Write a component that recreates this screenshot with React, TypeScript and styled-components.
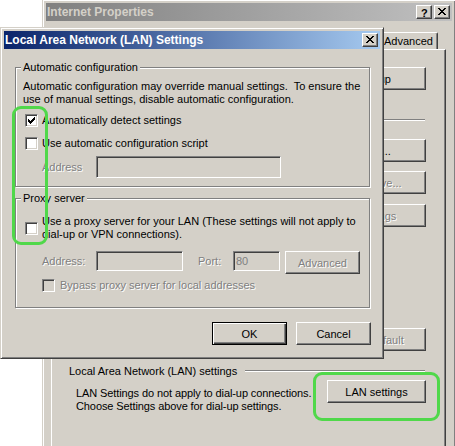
import React from "react";
import styled, { createGlobalStyle, css } from "styled-components";

const FACE = "#d4d0c8";
const SHADOW = "#808080";
const DARK = "#404040";
const FONT = `"Liberation Sans", Arial, sans-serif`;
const GREEN = "#50d84a";

const Global = createGlobalStyle`
  html, body { margin: 0; padding: 0; background: #fff; overflow: hidden; }
  body { font-family: ${FONT}; font-size: 11px; line-height: 13px; color: #000; }
`;

const Desktop = styled.div`
  position: relative;
  width: 455px;
  height: 446px;
  overflow: hidden;
  background: #fff;
`;

const Window = styled.div<{ $x: number; $y: number; $w: number; $h: number; $z: number }>`
  position: absolute;
  z-index: ${(p) => p.$z};
  left: ${(p) => p.$x}px;
  top: ${(p) => p.$y}px;
  width: ${(p) => p.$w}px;
  height: ${(p) => p.$h}px;
  box-sizing: border-box;
  background: ${FACE};
  border: 1px solid;
  border-color: ${FACE} ${DARK} ${DARK} ${FACE};
  box-shadow: inset 1px 1px 0 #fff, inset -1px -1px 0 ${SHADOW};
  padding: 3px;
  display: flex;
  flex-direction: column;
`;

const TitleBar = styled.div<{ $active?: boolean }>`
  flex: none;
  height: 18px;
  display: flex;
  align-items: center;
  padding: 0 2px 0 1px;
  background: ${(p) =>
    p.$active
      ? "linear-gradient(to right, #0a246a, #a6caf0)"
      : "linear-gradient(to right, #808080, #c0c0c0)"};
  color: ${(p) => (p.$active ? "#fff" : FACE)};
  font-weight: bold;
  font-size: 12px;
`;

const TitleText = styled.span`
  flex: 1;
  white-space: nowrap;
  overflow: hidden;
  line-height: 14px;
`;

const CaptionGroup = styled.div`
  display: flex;
  gap: 2px;
`;

const CaptionButton = styled.div`
  box-sizing: border-box;
  width: 16px;
  height: 14px;
  background: ${FACE};
  border: 1px solid;
  border-color: #fff ${DARK} ${DARK} #fff;
  box-shadow: inset -1px -1px 0 ${SHADOW};
  padding: 2px 0 0 3px;
  display: flex;
  align-items: flex-start;
  color: #000;
`;

const HelpGlyph = styled.span`
  font-weight: bold;
  font-size: 11px;
  line-height: 10px;
  margin-left: 1px;
`;

const X_RECTS: [number, number, number][] = [
  [0, 0, 2], [6, 0, 2], [1, 1, 2], [5, 1, 2], [2, 2, 4], [3, 3, 2],
  [2, 4, 4], [1, 5, 2], [5, 5, 2], [0, 6, 2], [6, 6, 2],
];

const CloseGlyph = () => (
  <svg width="8" height="7" viewBox="0 0 8 7" shapeRendering="crispEdges">
    <path d={X_RECTS.map(([x, y, w]) => `M${x} ${y}h${w}v1h-${w}z`).join("")} fill="#000" />
  </svg>
);

const CHECK_TOPS = [5, 6, 7, 6, 5, 4, 3];
const CheckGlyph = ({ color }: { color: string }) => (
  <svg width="11" height="11" viewBox="1 1 11 11" shapeRendering="crispEdges">
    <path d={CHECK_TOPS.map((t, i) => `M${3 + i} ${t}h1v3h-1z`).join("")} fill={color} />
  </svg>
);

/* ---------- common controls ---------- */

const Button = styled.button<{ $w?: number; $default?: boolean; $ml?: number }>`
  box-sizing: border-box;
  flex: none;
  width: ${(p) => p.$w ?? 75}px;
  height: 23px;
  padding: 0;
  margin: 0 0 0 ${(p) => p.$ml ?? 0}px;
  font-family: ${FONT};
  font-size: 11px;
  color: #000;
  background: ${FACE};
  border: 1px solid;
  border-color: #fff ${DARK} ${DARK} #fff;
  border-radius: 0;
  box-shadow: inset -1px -1px 0 ${SHADOW};
  white-space: nowrap;
  ${(p) =>
    p.$default &&
    css`
      border-color: #000;
      box-shadow: inset 1px 1px 0 #fff, inset -1px -1px 0 ${DARK}, inset -2px -2px 0 ${SHADOW};
    `}
  &:disabled {
    color: ${SHADOW};
    text-shadow: 1px 1px 0 #fff;
  }
`;

const Text = styled.span<{ $disabled?: boolean }>`
  white-space: nowrap;
  line-height: 13px;
  ${(p) =>
    p.$disabled &&
    css`
      color: ${SHADOW};
      text-shadow: 1px 1px 0 #fff;
    `}
`;

const CheckBox = styled.span<{ $disabled?: boolean }>`
  flex: none;
  display: block;
  box-sizing: border-box;
  width: 13px;
  height: 13px;
  border: 1px solid;
  border-color: ${SHADOW} #fff #fff ${SHADOW};
  box-shadow: inset 1px 1px 0 ${DARK}, inset -1px -1px 0 ${FACE};
  background: ${(p) => (p.$disabled ? FACE : "#fff")};
  svg { display: block; }
`;

const Radio = styled.span`
  flex: none;
  width: 12px;
  height: 12px;
  box-sizing: border-box;
  border-radius: 50%;
  border: 1px solid;
  border-color: ${SHADOW} #fff #fff ${SHADOW};
  background: #fff;
`;

const TextInput = styled.input<{ $w: number; $h: number }>`
  box-sizing: border-box;
  flex: none;
  width: ${(p) => p.$w}px;
  height: ${(p) => p.$h}px;
  margin: 0;
  padding: 0 2px;
  border: 1px solid;
  border-color: ${SHADOW} #fff #fff ${SHADOW};
  border-radius: 0;
  box-shadow: inset 1px 1px 0 ${DARK}, inset -1px -1px 0 ${FACE};
  background: ${FACE};
  font-family: ${FONT};
  font-size: 11px;
  color: ${SHADOW};
  -webkit-text-fill-color: ${SHADOW};
  opacity: 1;
`;

/* ---------- LAN dialog ---------- */

const DialogBody = styled.div`
  flex: 1;
  display: flex;
  flex-direction: column;
  padding: 18px 9px 10px 11px;
`;

const Group = styled.div<{ $mt?: number; $pt: number; $pb: number }>`
  position: relative;
  display: flex;
  flex-direction: column;
  margin: ${(p) => p.$mt ?? 0}px 1px 0 0;
  padding: ${(p) => p.$pt}px 6px ${(p) => p.$pb}px 7px;
  border: 1px solid ${SHADOW};
  box-shadow: 1px 1px 0 #fff, inset 1px 1px 0 #fff;
`;

const GroupLabel = styled.span`
  position: absolute;
  top: -7px;
  left: 5px;
  padding: 0 2px;
  line-height: 13px;
  background: ${FACE};
  white-space: nowrap;
`;

const Paragraph = styled.div`
  line-height: 13px;
  white-space: nowrap;
`;

const CheckRow = styled.div<{ $mt?: number; $indent: number; $gap?: number }>`
  display: flex;
  align-items: center;
  gap: ${(p) => p.$gap ?? 4}px;
  margin: ${(p) => p.$mt ?? 0}px 0 0 ${(p) => p.$indent}px;
`;

const FieldRow = styled.div<{ $mt: number; $align: string }>`
  display: flex;
  align-items: ${(p) => p.$align};
  margin: ${(p) => p.$mt}px 0 0 19px;
`;

const FieldLabel = styled(Text)<{ $w: number; $lh: number; $ml?: number }>`
  flex: none;
  width: ${(p) => p.$w}px;
  line-height: ${(p) => p.$lh}px;
  margin-left: ${(p) => p.$ml ?? 0}px;
`;

const ButtonRow = styled.div`
  display: flex;
  justify-content: flex-end;
  gap: 9px;
  margin-top: 14px;
`;

/* ---------- Internet Properties ---------- */

const TabStrip = styled.div`
  display: flex;
  align-items: flex-end;
  height: 19px;
  margin: 9px 0 0 5px;
`;

const Tab = styled.div<{ $w: number; $active?: boolean }>`
  box-sizing: border-box;
  flex: none;
  width: ${(p) => p.$w}px;
  height: 17px;
  padding-top: 1px;
  display: flex;
  align-items: center;
  justify-content: center;
  background: ${FACE};
  border: 1px solid;
  border-bottom: none;
  border-color: #fff ${DARK} transparent #fff;
  border-radius: 2px 2px 0 0;
  box-shadow: inset -1px 0 0 ${SHADOW};
  white-space: nowrap;
  ${(p) =>
    p.$active &&
    css`
      height: 20px;
      margin: 0 -2px -1px;
      position: relative;
      z-index: 1;
    `}
`;

const TabPanel = styled.div`
  flex: 1;
  display: flex;
  flex-direction: column;
  width: 395px;
  box-sizing: border-box;
  margin-left: 5px;
  padding: 17px 19px 0 17px;
  border: 1px solid;
  border-color: #fff ${DARK} ${DARK} #fff;
  box-shadow: inset -1px -1px 0 ${SHADOW};
`;

const EndRow = styled.div<{ $mt: number }>`
  display: flex;
  align-items: center;
  justify-content: flex-end;
  margin-top: ${(p) => p.$mt}px;
`;

const SectionHeader = styled.div<{ $mt: number }>`
  display: flex;
  align-items: flex-start;
  gap: 8px;
  height: 13px;
  margin-top: ${(p) => p.$mt}px;
`;

const EtchedLine = styled.div`
  flex: 1;
  height: 1px;
  margin: 5px 1px 0 0;
  background: ${SHADOW};
  border-bottom: 1px solid #fff;
`;

const DialRow = styled.div`
  display: flex;
  gap: 8px;
  margin-top: 12px;
`;

const ListBox = styled.div`
  flex: 1;
  height: 88px;
  box-sizing: border-box;
  border: 1px solid;
  border-color: ${SHADOW} #fff #fff ${SHADOW};
  box-shadow: inset 1px 1px 0 ${DARK}, inset -1px -1px 0 ${FACE};
  background: #fff;
`;

const ButtonColumn = styled.div`
  display: flex;
  flex-direction: column;
  & > :nth-child(2) { margin-top: 9px; }
  & > :nth-child(3) { margin-top: 10px; }
`;

const RadioList = styled.div`
  display: flex;
  flex-direction: column;
  gap: 8px;
  margin: 10px 0 0 2px;
`;

const LanRow = styled.div`
  display: flex;
  align-items: flex-start;
  justify-content: space-between;
  margin-top: 2px;
`;

const LanText = styled.div`
  margin: 7px 0 0 7px;
  line-height: 13px;
  letter-spacing: -0.1px;
  white-space: nowrap;
`;

/* ---------- annotation ---------- */

const Highlight = styled.div<{ $x: number; $y: number; $w: number; $h: number }>`
  position: absolute;
  z-index: 5;
  left: ${(p) => p.$x}px;
  top: ${(p) => p.$y}px;
  width: ${(p) => p.$w}px;
  height: ${(p) => p.$h}px;
  box-sizing: border-box;
  border: 3px solid ${GREEN};
  border-radius: 9px;
  pointer-events: none;
`;

/* tabs left of "Advanced" lie under the LAN dialog; only their frames are drawn */
const TABS: { label?: string; w: number; active?: boolean }[] = [
  { w: 50 },
  { w: 54 },
  { w: 50 },
  { w: 52 },
  { w: 72, active: true },
  { w: 54 },
  { label: "Advanced", w: 59 },
];

export default function App() {
  return (
    <>
      <Global />
      <Desktop>
        <Window $x={42} $y={-1} $w={414} $h={470} $z={1}>
          <TitleBar>
            <TitleText>Internet Properties</TitleText>
            <CaptionGroup>
              <CaptionButton>
                <HelpGlyph>?</HelpGlyph>
              </CaptionButton>
              <CaptionButton>
                <CloseGlyph />
              </CaptionButton>
            </CaptionGroup>
          </TitleBar>
          <TabStrip>
            {TABS.map((t, i) => (
              <Tab key={i} $w={t.w} $active={t.active}>
                {t.label}
              </Tab>
            ))}
          </TabStrip>
          <TabPanel>
            <EndRow $mt={0}>
              <Button $w={99}>Setup</Button>
            </EndRow>
            <SectionHeader $mt={24}>
              <EtchedLine />
            </SectionHeader>
            <DialRow>
              <ListBox />
              <ButtonColumn>
                <Button $w={99}>Add...</Button>
                <Button $w={99} disabled>
                  Remove...
                </Button>
                <Button $w={99} disabled>
                  Settings
                </Button>
              </ButtonColumn>
            </DialRow>
            <RadioList>
              <Radio />
              <Radio />
              <Radio />
            </RadioList>
            <EndRow $mt={39}>
              <Button $w={99} disabled>
                Set Default
              </Button>
            </EndRow>
            <SectionHeader $mt={14}>
              <Text>Local Area Network (LAN) settings</Text>
              <EtchedLine />
            </SectionHeader>
            <LanRow>
              <LanText>
                LAN Settings do not apply to dial-up connections.
                <br />
                Choose Settings above for dial-up settings.
              </LanText>
              <Button $w={99}>LAN settings</Button>
            </LanRow>
          </TabPanel>
        </Window>

        <Window $x={0} $y={27} $w={384} $h={332} $z={2}>
          <TitleBar $active>
            <TitleText>Local Area Network (LAN) Settings</TitleText>
            <CaptionButton>
              <CloseGlyph />
            </CaptionButton>
          </TitleBar>
          <DialogBody>
            <Group $pt={12} $pb={8}>
              <GroupLabel>Automatic configuration</GroupLabel>
              <Paragraph>
                Automatic configuration may override manual settings.{"\u00a0 "}To ensure the
                <br />
                use of manual settings, disable automatic configuration.
              </Paragraph>
              <CheckRow $mt={8} $indent={2}>
                <CheckBox>
                  <CheckGlyph color="#000" />
                </CheckBox>
                <Text>Automatically detect settings</Text>
              </CheckRow>
              <CheckRow $mt={10} $indent={2}>
                <CheckBox />
                <Text>Use automatic configuration script</Text>
              </CheckRow>
              <FieldRow $mt={6} $align="center">
                <FieldLabel $disabled $w={54} $lh={22}>
                  Address
                </FieldLabel>
                <TextInput $w={185} $h={22} disabled />
              </FieldRow>
            </Group>

            <Group $mt={11} $pt={16} $pb={15}>
              <GroupLabel>Proxy server</GroupLabel>
              <CheckRow $indent={2}>
                <CheckBox />
                <Text>
                  Use a proxy server for your LAN (These settings will not apply to
                  <br />
                  dial-up or VPN connections).
                </Text>
              </CheckRow>
              <FieldRow $mt={10} $align="flex-start">
                <FieldLabel $disabled $w={54} $lh={20}>
                  Address:
                </FieldLabel>
                <TextInput $w={87} $h={20} disabled />
                <FieldLabel $disabled $w={35} $lh={20} $ml={15}>
                  Port:
                </FieldLabel>
                <TextInput $w={47} $h={20} disabled defaultValue="80" />
                <Button $w={75} $ml={5} disabled>
                  Advanced
                </Button>
              </FieldRow>
              <CheckRow $mt={5} $indent={19} $gap={5}>
                <CheckBox $disabled />
                <Text $disabled>Bypass proxy server for local addresses</Text>
              </CheckRow>
            </Group>

            <ButtonRow>
              <Button $default>OK</Button>
              <Button>Cancel</Button>
            </ButtonRow>
          </DialogBody>
        </Window>

        <Highlight $x={12} $y={106} $w={36} $h={139} />
        <Highlight $x={313} $y={372} $w={127} $h={49} />
      </Desktop>
    </>
  );
}
